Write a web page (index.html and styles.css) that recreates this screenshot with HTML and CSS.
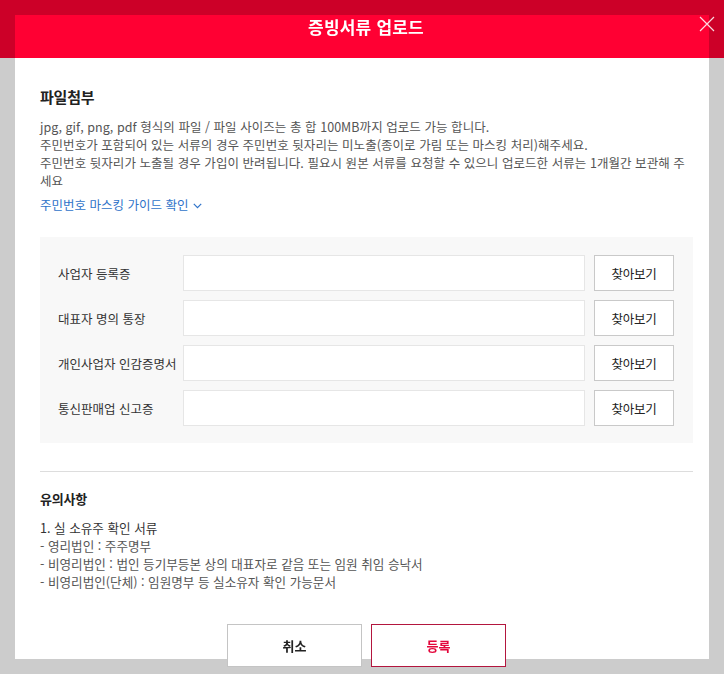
FILE: index.html
```html
<!DOCTYPE html>
<html lang="ko">
<head>
<meta charset="utf-8">
<title>증빙서류 업로드</title>
<link rel="stylesheet" href="styles.css">
</head>
<body>
<div class="page">
  <div class="page-top"></div>
</div>
<div class="overlay"></div>
<div class="modal">
  <div class="modal-header">
    <h1 class="modal-title">증빙서류 업로드</h1>
    <button class="close" type="button" aria-label="닫기">
      <svg width="16" height="16" viewBox="0 0 16 16"><path d="M1 1L15 15M15 1L1 15" stroke="rgba(255,255,255,0.85)" stroke-width="1.2" fill="none"/></svg>
    </button>
  </div>
  <div class="modal-body">
    <h2 class="sec-title">파일첨부</h2>
    <p class="desc">jpg, gif, png, pdf 형식의 파일 / 파일 사이즈는 총 합 100MB까지 업로드 가능 합니다.<br>주민번호가 포함되어 있는 서류의 경우 주민번호 뒷자리는 미노출(종이로 가림 또는 마스킹 처리)해주세요.<br>주민번호 뒷자리가 노출될 경우 가입이 반려됩니다. 필요시 원본 서류를 요청할 수 있으니 업로드한 서류는 1개월간 보관해 주세요</p>
    <a class="guide" href="#">주민번호 마스킹 가이드 확인 <svg class="chev" width="9" height="6" viewBox="0 0 9 6"><path d="M0.8 0.8L4.5 4.6L8.2 0.8" stroke="#2f73c9" stroke-width="1.2" fill="none"/></svg></a>
    <div class="upload-box">
      <div class="row"><span class="label">사업자 등록증</span><input class="file" type="text"><button class="find" type="button">찾아보기</button></div>
      <div class="row"><span class="label">대표자 명의 통장</span><input class="file" type="text"><button class="find" type="button">찾아보기</button></div>
      <div class="row"><span class="label">개인사업자 인감증명서</span><input class="file" type="text"><button class="find" type="button">찾아보기</button></div>
      <div class="row"><span class="label">통신판매업 신고증</span><input class="file" type="text"><button class="find" type="button">찾아보기</button></div>
    </div>
    <hr class="divider">
    <h3 class="note-title">유의사항</h3>
    <div class="notes">
      <p class="note-head">1. 실 소유주 확인 서류</p>
      <p class="note">- 영리법인 : 주주명부</p>
      <p class="note">- 비영리법인 : 법인 등기부등본 상의 대표자로 같음 또는 임원 취임 승낙서</p>
      <p class="note">- 비영리법인(단체) : 임원명부 등 실소유자 확인 가능문서</p>
    </div>
  </div>
  <div class="modal-footer">
    <button class="btn btn-cancel" type="button">취소</button>
    <button class="btn btn-submit" type="button">등록</button>
  </div>
</div>
</body>
</html>
```

FILE: styles.css
```css
* { box-sizing: border-box; }
html, body { margin: 0; padding: 0; }
body {
  font-family: "Noto Sans CJK KR", "Noto Sans", sans-serif;
  background: #ffffff;
  width: 724px;
  height: 674px;
  overflow: hidden;
}
.page { height: 674px; }
.page-top { height: 58px; background: #ff0033; }
.overlay {
  position: fixed;
  inset: 0;
  background: rgba(0, 0, 0, 0.2);
}
.modal {
  position: absolute;
  top: 15px;
  left: 15px;
  width: 694px;
  height: 644px;
  background: #ffffff;
  display: flex;
  flex-direction: column;
}
.modal-header {
  position: relative;
  height: 43px;
  background: #ff0033;
  padding-left: 8px;
}
.modal-title {
  margin: 0;
  text-align: center;
  color: #ffffff;
  font-size: 17px;
  font-weight: 700;
  line-height: 23px;
  letter-spacing: 0.2px;
}
.close {
  position: absolute;
  top: 0;
  right: -7px;
  width: 18px;
  height: 18px;
  padding: 1px;
  border: 0;
  background: none;
  cursor: pointer;
}
.close svg { display: block; }
.modal-body {
  flex: 1;
  min-height: 0;
  overflow: hidden;
  padding: 29px 16px 0 25px;
}
.sec-title {
  margin: 0;
  font-size: 15px;
  font-weight: 700;
  line-height: 20px;
  color: #222222;
  letter-spacing: -0.2px;
}
.desc {
  margin: 11px 0 0;
  font-size: 12.5px;
  line-height: 18px;
  color: #555555;
  letter-spacing: 0.05px;
}
.guide {
  display: inline-flex;
  align-items: center;
  gap: 4px;
  margin-top: 6px;
  font-size: 12.5px;
  line-height: 18px;
  color: #2f73c9;
  text-decoration: none;
  letter-spacing: 0;
}
.chev { margin-top: 2px; }
.upload-box {
  margin-top: 22px;
  background: #f8f8f8;
  padding: 18px 19px 17px 18px;
  display: flex;
  flex-direction: column;
  gap: 9px;
}
.row {
  display: flex;
  align-items: center;
  height: 36px;
}
.label {
  width: 125px;
  font-size: 12.5px;
  color: #333333;
  letter-spacing: 0;
  white-space: nowrap;
}
.file {
  flex: 1;
  height: 36px;
  border: 1px solid #e6e6e6;
  background: #ffffff;
  margin: 0;
  padding: 0 8px;
  outline: none;
}
.find {
  width: 80px;
  height: 36px;
  margin-left: 9px;
  border: 1px solid #c9c9c9;
  background: #ffffff;
  font-family: inherit;
  font-size: 12.5px;
  color: #222222;
  letter-spacing: -0.2px;
  padding: 0;
}
.divider {
  margin: 28px 0 0;
  border: 0;
  border-top: 1px solid #dddddd;
  height: 0;
}
.note-title {
  margin: 18px 0 0;
  font-size: 13px;
  font-weight: 700;
  line-height: 18px;
  color: #222222;
  letter-spacing: -0.2px;
}
.notes { margin-top: 11px; }
.notes p {
  margin: 0;
  font-size: 12.6px;
  line-height: 18px;
  letter-spacing: 0;
}
.note-head { color: #333333; }
.note { color: #555555; }
.modal-footer {
  height: 35px;
  display: flex;
  justify-content: center;
  align-items: flex-start;
  gap: 9px;
  padding-left: 9px;
}
.btn {
  width: 135px;
  height: 43px;
  flex: none;
  background: #ffffff;
  font-family: inherit;
  font-size: 13px;
  font-weight: 700;
  padding: 0;
  letter-spacing: 0;
}
.btn-cancel { border: 1px solid #c4c4c4; color: #222222; }
.btn-submit { border: 1px solid #b3163e; color: #e3063b; }
```
